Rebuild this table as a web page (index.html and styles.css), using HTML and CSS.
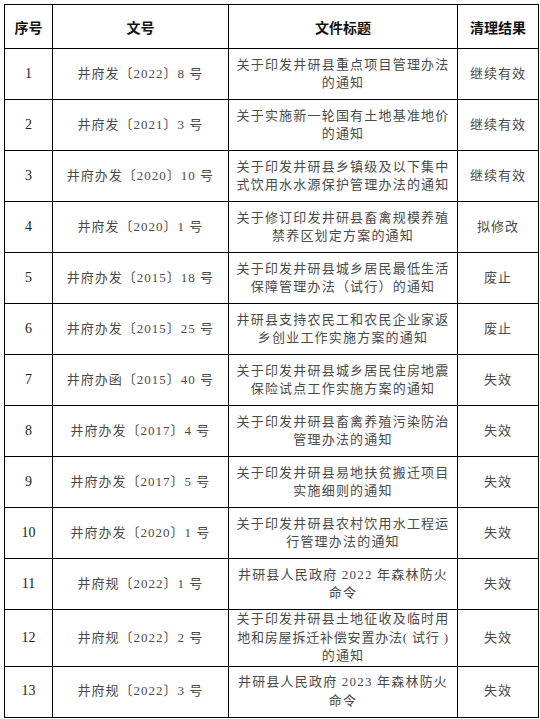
FILE: index.html
```html
<!DOCTYPE html>
<html lang="zh-CN">
<head>
<meta charset="utf-8">
<title>清理结果</title>
<link rel="stylesheet" href="styles.css">
</head>
<body>
<table class="list">
  <colgroup>
    <col class="c-no"><col class="c-doc"><col class="c-title"><col class="c-result">
  </colgroup>
  <thead>
    <tr class="head"><th>序号</th><th>文号</th><th>文件标题</th><th>清理结果</th></tr>
  </thead>
  <tbody>
    <tr><td class="num">1</td><td>井府发〔2022〕8 号</td><td class="title">关于印发井研县重点项目管理办法<br>的通知</td><td>继续有效</td></tr>
    <tr><td class="num">2</td><td>井府发〔2021〕3 号</td><td class="title">关于实施新一轮国有土地基准地价<br>的通知</td><td>继续有效</td></tr>
    <tr><td class="num">3</td><td>井府办发〔2020〕10 号</td><td class="title">关于印发井研县乡镇级及以下集中<br>式饮用水水源保护管理办法的通知</td><td>继续有效</td></tr>
    <tr><td class="num">4</td><td>井府发〔2020〕1 号</td><td class="title">关于修订印发井研县畜禽规模养殖<br>禁养区划定方案的通知</td><td>拟修改</td></tr>
    <tr><td class="num">5</td><td>井府办发〔2015〕18 号</td><td class="title">关于印发井研县城乡居民最低生活<br>保障管理办法（试行）的通知</td><td>废止</td></tr>
    <tr><td class="num">6</td><td>井府办发〔2015〕25 号</td><td class="title">井研县支持农民工和农民企业家返<br>乡创业工作实施方案的通知</td><td>废止</td></tr>
    <tr><td class="num">7</td><td>井府办函〔2015〕40 号</td><td class="title">关于印发井研县城乡居民住房地震<br>保险试点工作实施方案的通知</td><td>失效</td></tr>
    <tr><td class="num">8</td><td>井府办发〔2017〕4 号</td><td class="title">关于印发井研县畜禽养殖污染防治<br>管理办法的通知</td><td>失效</td></tr>
    <tr><td class="num">9</td><td>井府办发〔2017〕5 号</td><td class="title">关于印发井研县易地扶贫搬迁项目<br>实施细则的通知</td><td>失效</td></tr>
    <tr><td class="num">10</td><td>井府办发〔2020〕1 号</td><td class="title">关于印发井研县农村饮用水工程运<br>行管理办法的通知</td><td>失效</td></tr>
    <tr><td class="num">11</td><td>井府规〔2022〕1 号</td><td class="title">井研县人民政府 2022 年森林防火<br>命令</td><td>失效</td></tr>
    <tr class="tall"><td class="num">12</td><td>井府规〔2022〕2 号</td><td class="title">关于印发井研县土地征收及临时用<br><span class="tight">地和房屋拆迁补偿安置办法( 试行 )</span><br>的通知</td><td>失效</td></tr>
    <tr><td class="num">13</td><td>井府规〔2022〕3 号</td><td class="title">井研县人民政府 2023 年森林防火<br>命令</td><td>失效</td></tr>
  </tbody>
</table>
</body>
</html>
```

FILE: styles.css
```css
html, body {
  margin: 0;
  padding: 0;
  background: #ffffff;
}
body {
  padding: 4px 0 0 4px;
}
.list {
  border-collapse: collapse;
  width: 534px;
  table-layout: fixed;
  font-family: "Liberation Serif", "Noto Sans CJK SC", serif;
  color: #4a4a4a;
}
.c-no { width: 48px; }
.c-doc { width: 176px; }
.c-title { width: 229px; }
.c-result { width: 81px; }
.list th, .list td {
  border: 1px solid #000;
  text-align: center;
  vertical-align: middle;
  padding: 0;
}
.list th {
  font-family: "Noto Sans CJK SC", sans-serif;
  font-weight: 700;
  font-size: 14px;
  color: #111;
}
.head { height: 44px; }
.list tbody tr { height: 51px; }
.list tbody tr.tall { height: 55px; }
.list td {
  font-size: 13px;
  letter-spacing: 1px;
  line-height: 18.5px;
  font-weight: 400;
}
.list td.num {
  font-size: 14px;
  letter-spacing: 0;
  color: #222;
}
.list td.title {
  white-space: nowrap;
  letter-spacing: 1.2px;
}
.tight { letter-spacing: 0.8px; }
```
